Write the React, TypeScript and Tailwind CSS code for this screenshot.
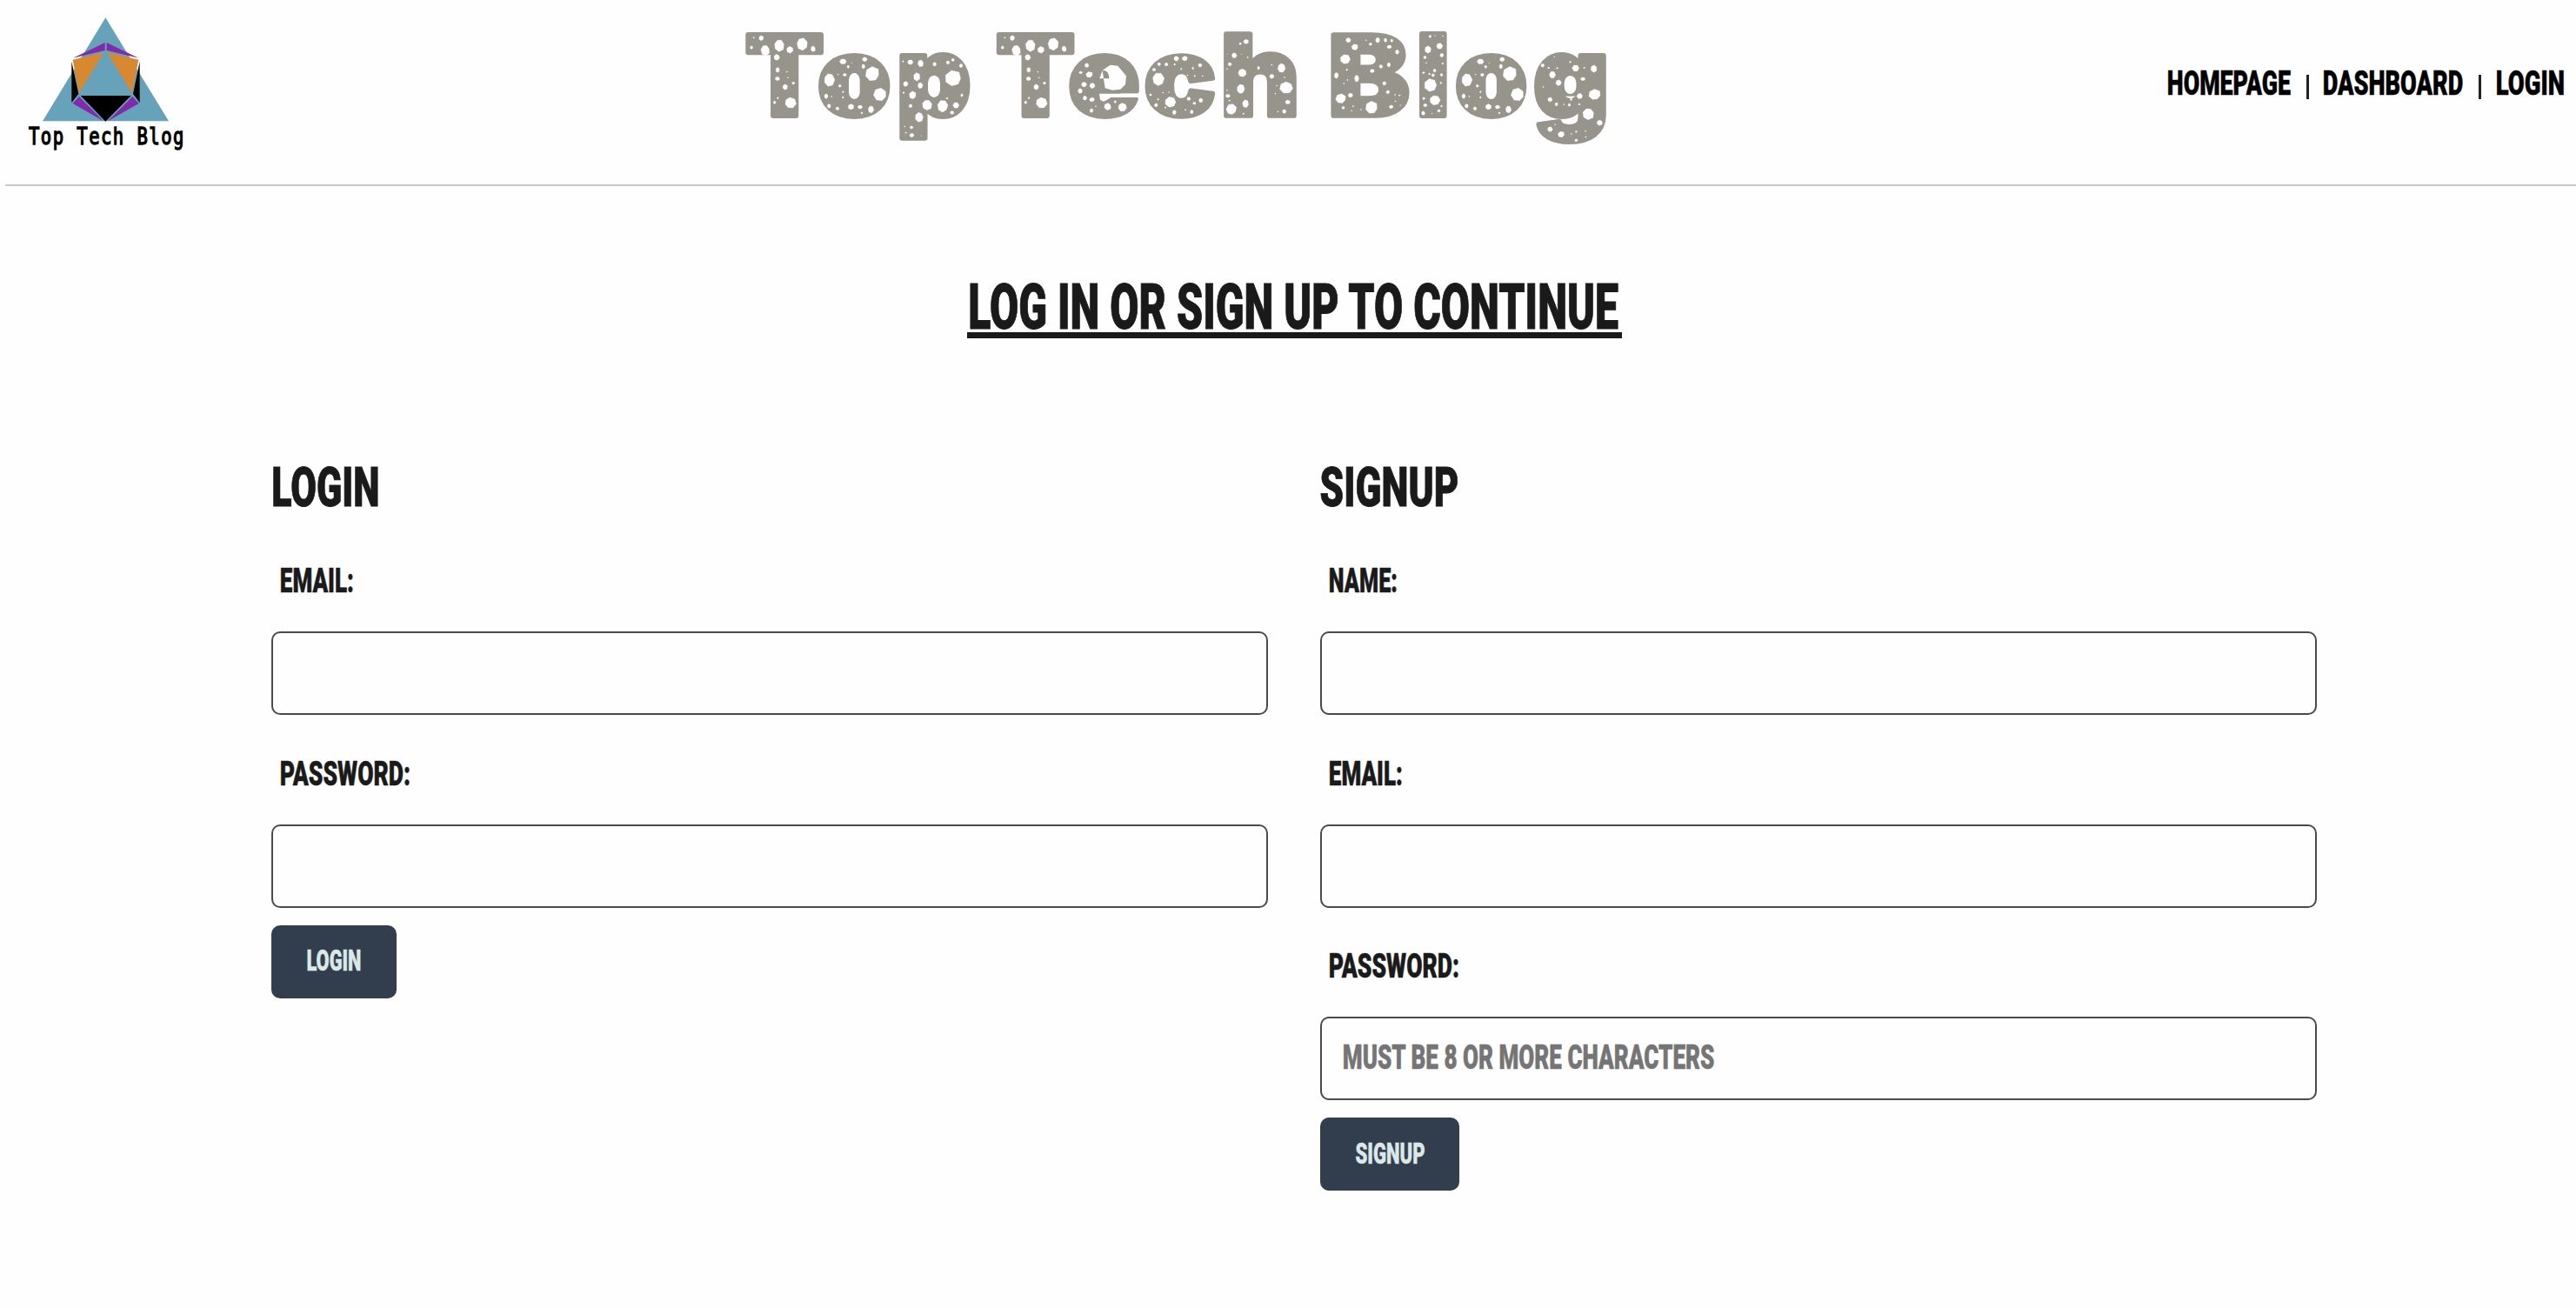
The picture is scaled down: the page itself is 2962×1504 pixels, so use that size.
import { useLayoutEffect, useRef, useState } from "react";

type Ink = { left: number; right: number; up: number; down: number };

function measureInk(text: string, font: string): Ink {
  const ctx = document.createElement("canvas").getContext("2d")!;
  ctx.font = font;
  const m = ctx.measureText(text);
  return {
    left: -m.actualBoundingBoxLeft,
    right: m.actualBoundingBoxRight,
    up: m.actualBoundingBoxAscent,
    down: m.actualBoundingBoxDescent,
  };
}

/* Condensed display text: squeezes a heavy face to the width of its box. */
function Condensed({ text, className }: { text: string; className: string }) {
  const ref = useRef<HTMLSpanElement>(null);
  const [transform, setTransform] = useState("none");
  useLayoutEffect(() => {
    const el = ref.current!;
    const size = parseFloat(getComputedStyle(el).fontSize);
    const ink = measureInk(text, `900 ${size}px Roboto`);
    const pad = size * 0.007;
    const k = el.clientWidth / (ink.right - ink.left + pad * 2);
    setTransform(`translate(${(pad - ink.left) * k}px, ${size * 0.014}px) scaleX(${k})`);
  }, [text]);
  return (
    <span ref={ref} className={"block shrink-0 " + className}>
      <span
        className="block w-max origin-top-left whitespace-nowrap font-['Roboto',sans-serif] font-black leading-[0.711] [-webkit-text-stroke:0.014em_currentColor]"
        style={{ transform }}
      >
        {text}
      </span>
    </span>
  );
}

/* letter, x1, x2, y1, y2 */
const letters: [string, number, number, number, number][] = [
  ["T", 856.3, 947, 37, 136],
  ["o", 941, 1024, 61, 137.3],
  ["p", 1033, 1116, 61, 162.7],
  ["T", 1145, 1235.7, 37, 136],
  ["e", 1229.3, 1310, 61, 137.3],
  ["c", 1316.7, 1398, 61, 137.3],
  ["h", 1406, 1490.8, 35.7, 136],
  ["B", 1529.7, 1621.3, 37, 136],
  ["l", 1630.6, 1664, 35.7, 136],
  ["o", 1674, 1756, 61, 137.3],
  ["g", 1764, 1847, 61, 166.7],
];

function TitleLetter({ d }: { d: (typeof letters)[number] }) {
  const [ch, x1, x2, y1, y2] = d;
  const ink = measureInk(ch, "900 100px Inter");
  const s = 3;
  const kx = (x2 - x1 - 2 * s) / (ink.right - ink.left);
  const ky = (y2 - y1 - 2 * s) / (ink.up + ink.down);
  return (
    <text
      transform={`translate(${x1 + s - ink.left * kx} ${y2 - s - ink.down * ky}) scale(${kx} ${ky})`}
      fontFamily="Inter, sans-serif"
      fontWeight={900}
      fontSize={100}
      fill="#97958b"
      stroke="#97958b"
      strokeWidth={6}
      strokeLinejoin="round"
      vectorEffect="non-scaling-stroke"
    >
      {ch}
    </text>
  );
}

/* Stone pits: centre x, centre y, half width, half height */
type Pit = [number, number, number, number];

const pitsT: Pit[] = [
  [80, 100, 3, 2], [106, 102, 8, 9], [72, 134, 5, 6], [120, 143, 15, 18], [168, 126, 17, 21],
  [205, 142, 11, 11], [246, 122, 19, 22], [285, 138, 8, 10], [159, 167, 10, 11], [162, 211, 7, 9],
  [162, 241, 8, 7], [194, 218, 2, 2], [198, 238, 3, 1], [188, 270, 9, 10], [217, 257, 5, 4],
  [163, 308, 3, 3], [152, 323, 4, 5], [206, 325, 20, 19],
];

const pitsO: Pit[] = [
  [388, 182, 11, 9], [406, 200, 4, 5], [418, 187, 2, 1], [463, 175, 8, 7], [458, 199, 6, 8],
  [490, 226, 24, 24], [340, 245, 18, 23], [371, 227, 2, 2], [394, 228, 6, 5], [377, 266, 5, 5],
  [388, 287, 3, 3], [388, 306, 3, 3], [349, 303, 2, 2], [330, 302, 6, 8], [340, 336, 6, 7],
  [369, 344, 6, 6], [516, 296, 21, 21], [415, 338, 11, 10], [447, 339, 8, 6], [484, 347, 10, 13],
  [453, 360, 3, 3],
];

const pitsLeft: Pit[] = [
  [595, 182, 2, 3], [620, 185, 10, 9], [656, 188, 10, 12], [704, 191, 6, 7], [750, 186, 6, 6],
  [767, 177, 5, 5], [795, 197, 6, 7], [642, 235, 12, 15], [604, 260, 8, 9], [654, 265, 9, 11],
  [597, 290, 3, 3], [628, 299, 12, 14], [769, 241, 28, 26], [798, 299, 4, 5], [621, 336, 6, 6],
  [678, 331, 17, 18], [732, 337, 17, 20], [777, 333, 11, 11], [764, 358, 7, 6], [747, 309, 3, 3],
  [651, 374, 13, 16], [601, 406, 2, 2], [624, 409, 6, 5], [605, 428, 3, 2], [625, 437, 8, 7], [658, 439, 1, 1],
  [1229, 195, 7, 7], [1208, 220, 6, 4], [1238, 228, 12, 10], [1219, 261, 9, 9], [1248, 266, 9, 9],
  [1206, 283, 8, 9], [1222, 308, 7, 8], [1247, 314, 9, 7], [1245, 352, 6, 7], [1260, 337, 2, 2],
  [1301, 337, 12, 12], [1327, 321, 4, 4], [1351, 340, 15, 15],
  [1478, 191, 6, 6], [1503, 192, 6, 6], [1461, 210, 6, 5], [1475, 244, 20, 23], [1538, 172, 8, 8],
  [1532, 192, 3, 3], [1449, 297, 4, 4], [1492, 290, 2, 2], [1512, 288, 2, 2], [1475, 313, 3, 3],
  [1468, 333, 6, 6], [1500, 341, 3, 3], [1518, 322, 18, 17], [1531, 358, 6, 8],
];

const pitsRight: Pit[] = [
  [36, 172, 7, 8], [65, 172, 9, 8], [31, 193, 2, 2], [53, 208, 2, 3], [92, 205, 3, 4],
  [116, 195, 6, 6], [74, 230, 2, 2], [98, 232, 2, 3], [124, 232, 2, 2], [78, 311, 6, 6], [97, 326, 5, 4],
  [118, 316, 7, 8], [67, 349, 3, 2], [88, 356, 5, 6],
  [269, 114, 9, 8], [250, 121, 4, 4], [230, 161, 8, 9], [254, 157, 1, 1], [275, 168, 2, 2], [207, 157, 1, 1],
  [215, 191, 6, 6], [206, 208, 2, 2], [256, 221, 14, 14], [252, 278, 13, 16], [209, 301, 8, 6],
  [206, 281, 2, 2], [214, 317, 3, 2], [268, 328, 10, 13], [220, 348, 17, 19], [261, 362, 3, 2],
  [311, 204, 4, 6], [355, 233, 8, 8], [355, 194, 2, 2], [387, 204, 13, 16], [398, 237, 2, 2],
  [404, 272, 21, 19], [372, 265, 2, 2], [367, 293, 2, 2], [409, 322, 8, 7], [397, 354, 6, 7], [376, 355, 2, 2],
  [611, 108, 8, 8], [633, 133, 11, 10], [670, 109, 2, 2], [685, 122, 5, 4], [709, 109, 7, 9], [735, 108, 5, 7],
  [756, 110, 4, 5], [748, 132, 8, 6], [774, 150, 6, 8], [600, 175, 17, 17], [606, 211, 3, 3], [720, 199, 6, 6],
  [746, 194, 6, 8], [691, 215, 7, 6], [571, 231, 7, 10], [639, 241, 7, 11], [608, 246, 2, 2], [596, 258, 2, 2],
  [731, 258, 6, 7], [743, 288, 6, 6], [618, 299, 8, 8], [586, 311, 17, 16], [767, 297, 2, 2], [782, 299, 3, 2],
  [768, 319, 2, 2], [785, 333, 2, 1], [689, 342, 20, 21], [754, 339, 7, 6], [594, 342, 5, 5], [627, 336, 2, 3],
  [622, 352, 2, 2], [653, 348, 2, 2],
  [884, 96, 4, 5], [900, 93, 2, 1], [926, 94, 3, 1], [877, 141, 10, 12], [915, 129, 11, 11], [867, 168, 5, 5],
  [923, 161, 6, 7], [871, 187, 2, 2], [926, 189, 3, 3], [862, 221, 4, 3], [882, 225, 3, 3], [899, 213, 5, 6],
  [922, 228, 4, 5], [894, 230, 5, 5], [920, 256, 3, 3], [886, 264, 20, 21], [863, 310, 4, 4], [899, 316, 18, 17],
  [868, 333, 6, 5], [922, 336, 3, 3], [861, 360, 6, 7], [890, 361, 2, 1], [913, 352, 5, 5],
  [1260, 196, 6, 6], [1280, 204, 3, 3], [1299, 166, 2, 1], [1292, 228, 11, 13], [1308, 205, 4, 2],
  [1352, 184, 3, 3], [1370, 205, 11, 11], [1399, 204, 3, 2], [1431, 207, 10, 12], [1394, 242, 8, 6],
  [1313, 256, 9, 10], [1262, 270, 2, 2], [1284, 313, 8, 8], [1306, 330, 5, 6], [1331, 330, 2, 2],
  [1349, 332, 4, 5], [1355, 313, 3, 4], [1383, 301, 10, 10], [1382, 330, 3, 3], [1434, 297, 20, 18],
  [1412, 362, 19, 20], [1450, 393, 10, 10], [1284, 416, 9, 9], [1322, 434, 11, 10], [1301, 400, 2, 2],
  [1372, 424, 3, 3], [1403, 422, 2, 2], [1404, 443, 2, 2], [1372, 454, 5, 4], [1356, 432, 2, 2],
];

function pitPath([cx, cy, rx, ry]: Pit) {
  const n = rx > 12 ? 7 : 6;
  let d = "";
  for (let i = 0; i < n; i++) {
    const seed = Math.abs(Math.sin(cx * 12.9 + cy * 7.2 + i * 31.7));
    const r = 0.88 + seed * 0.22;
    const a = ((i + ((cx + cy) % 5) * 0.2) / n) * Math.PI * 2;
    d += `${i ? "L" : "M"}${(cx + Math.cos(a) * rx * r).toFixed(1)} ${(cy + Math.sin(a) * ry * r).toFixed(1)}`;
  }
  return d + "Z";
}

const Pits = ({ pits }: { pits: Pit[] }) => (
  <path d={pits.map(pitPath).join("")} fill="#fff" stroke="#fff" strokeWidth={0.8} strokeLinejoin="round" />
);

/* Bowl of a letter narrowed to an upright slot */
const Slot = ({ x, y, w, h }: { x: number; y: number; w: number; h: number }) => (
  <>
    <rect x={x - 12} y={y - 8} width={w + 24} height={h + 16} fill="#97958b" />
    <rect x={x} y={y} width={w} height={h} rx={w / 2} ry={w * 0.66} fill="#fff" />
  </>
);

function Title() {
  return (
    <svg className="h-[208px] w-[1004px] shrink-0" viewBox="850 0 1004 208" role="img" aria-label="Top Tech Blog">
      {letters.map((d, i) => (
        <TitleLetter key={i} d={d} />
      ))}
      <g transform="translate(840 10) scale(0.33333)">
        <Slot x={408} y={222} w={38} h={90} />
        <Slot x={681} y={230} w={42} h={76} />
        <path d="M1255 215H1345V325H1255Z" fill="#97958b" />
        <path d="M1284 212L1310 194L1336 197L1365 232L1362 262L1345 278L1318 281L1292 274L1287 241H1273L1280 221Z" fill="#fff" />
        <path d="M1283 213Q1305 210 1306 241H1287Z" fill="#97958b" />
        <path d="M1272 293H1412V306H1312L1298 315L1287 320L1275 314Z" fill="#fff" />
        <Pits pits={pitsT} />
        <Pits pits={pitsO} />
        <g transform="translate(866 0)">
          <Pits pits={pitsT} />
        </g>
        <Pits pits={pitsLeft} />
      </g>
      <g transform="translate(1340 10) scale(0.34435 0.33333)">
        <Slot x={1070} y={222} w={36} h={90} />
        <Slot x={1332} y={231} w={40} h={63} />
        <Pits pits={pitsRight} />
      </g>
      <g transform="translate(1573 10) scale(0.33333)">
        <Pits pits={pitsO} />
      </g>
    </svg>
  );
}

function Logo() {
  return (
    <svg className="h-[175px] w-[260px]" viewBox="0 0 780 525">
      <path d="M364 61L582 418H147Z" fill="#66a3bb" />
      <path d="M252 200L362 147V174ZM478 200L368 147V174ZM273 333L357 418L251 357ZM457 333L372 418L479 357Z" fill="#802caa" />
      <path d="M251 206L358 181L273 320ZM478 206L370 181L455 320Z" fill="#d88830" />
      <path d="M247 212L271 324L247 354ZM482 212L459 324L482 354ZM278 330H452L364 419Z" fill="#000" />
      <text
        transform="translate(99 498) scale(0.8 1)"
        textLength="669"
        lengthAdjust="spacing"
        fontFamily="'DejaVu Sans Mono', monospace"
        fontSize="77"
        stroke="#000"
        strokeWidth="4"
      >
        Top Tech Blog
      </text>
    </svg>
  );
}

function Field({ label, width, placeholder }: { label: string; width: string; placeholder?: string }) {
  return (
    <label className="block h-[221.5px]">
      <Condensed text={label} className={"ml-[10.5px] h-[27px] text-[38.5px] " + width} />
      <div className="mt-[46px] flex h-[96px] w-full items-center rounded-[10px] border-2 border-[#4a4a4a] pl-[25px]">
        {placeholder && <Condensed text={placeholder} className="-mt-[3px] h-[28px] w-[427px] text-[39px] text-[#757575]" />}
      </div>
    </label>
  );
}

function Submit({ label, box, width }: { label: string; box: string; width: string }) {
  return (
    <button
      type="button"
      className={"-mt-[32.5px] flex h-[84px] items-center justify-center rounded-[10px] bg-[#323e4e] text-[#dce8e8] " + box}
    >
      <Condensed text={label} className={"h-[23px] text-[32.5px] " + width} />
    </button>
  );
}

export default function App() {
  return (
    <div className="h-[1504px] w-[2962px] overflow-hidden bg-[#fefefe] text-[#1a1a1a]">
      <header className="ml-[6px] flex h-[214px] items-start border-b-2 border-[#c9c9c9]">
        <div className="-ml-[6px] w-[850px] shrink-0">
          <Logo />
        </div>
        <Title />
        <nav className="ml-auto mt-[81px] flex items-start pr-[15px] text-[39.5px] text-black">
          <Condensed text="HOMEPAGE" className="h-[28px] w-[140.5px]" />
          <span className="ml-[18.5px] mr-[17.5px] mt-[5px] h-[28px] w-[3px] bg-[#222]" />
          <Condensed text="DASHBOARD" className="h-[28px] w-[160px]" />
          <span className="ml-[17.5px] mr-[18px] mt-[5px] h-[28px] w-[3px] bg-[#222]" />
          <Condensed text="LOGIN" className="h-[28px] w-[76.5px]" />
        </nav>
      </header>

      <main>
        <h1 className="ml-[1112px] mt-[113px] h-[62px] w-[752.5px] border-b-[7px] border-[#1a1a1a] pl-[2.5px] pt-[0.5px]">
          <Condensed text="LOG IN OR SIGN UP TO CONTINUE" className="h-[51px] w-[747px] text-[71.5px]" />
        </h1>

        <div className="ml-[312px] mt-[147px] grid w-[2352px] grid-cols-2 gap-[60px]">
          <form>
            <h2 className="mb-[71.5px] pl-[2px] pt-[0.5px]">
              <Condensed text="LOGIN" className="h-[45px] w-[121px] text-[63.5px]" />
            </h2>
            <Field label="EMAIL:" width="w-[83px]" />
            <Field label="PASSWORD:" width="w-[148px]" />
            <Submit label="LOGIN" box="w-[144px]" width="w-[61.5px]" />
          </form>
          <form>
            <h2 className="mb-[71.5px] pt-[0.5px]">
              <Condensed text="SIGNUP" className="h-[45px] w-[158px] text-[63.5px]" />
            </h2>
            <Field label="NAME:" width="w-[77px]" />
            <Field label="EMAIL:" width="w-[83px]" />
            <Field label="PASSWORD:" width="w-[148px]" placeholder="MUST BE 8 OR MORE CHARACTERS" />
            <Submit label="SIGNUP" box="w-[160px]" width="w-[79px]" />
          </form>
        </div>
      </main>
    </div>
  );
}
